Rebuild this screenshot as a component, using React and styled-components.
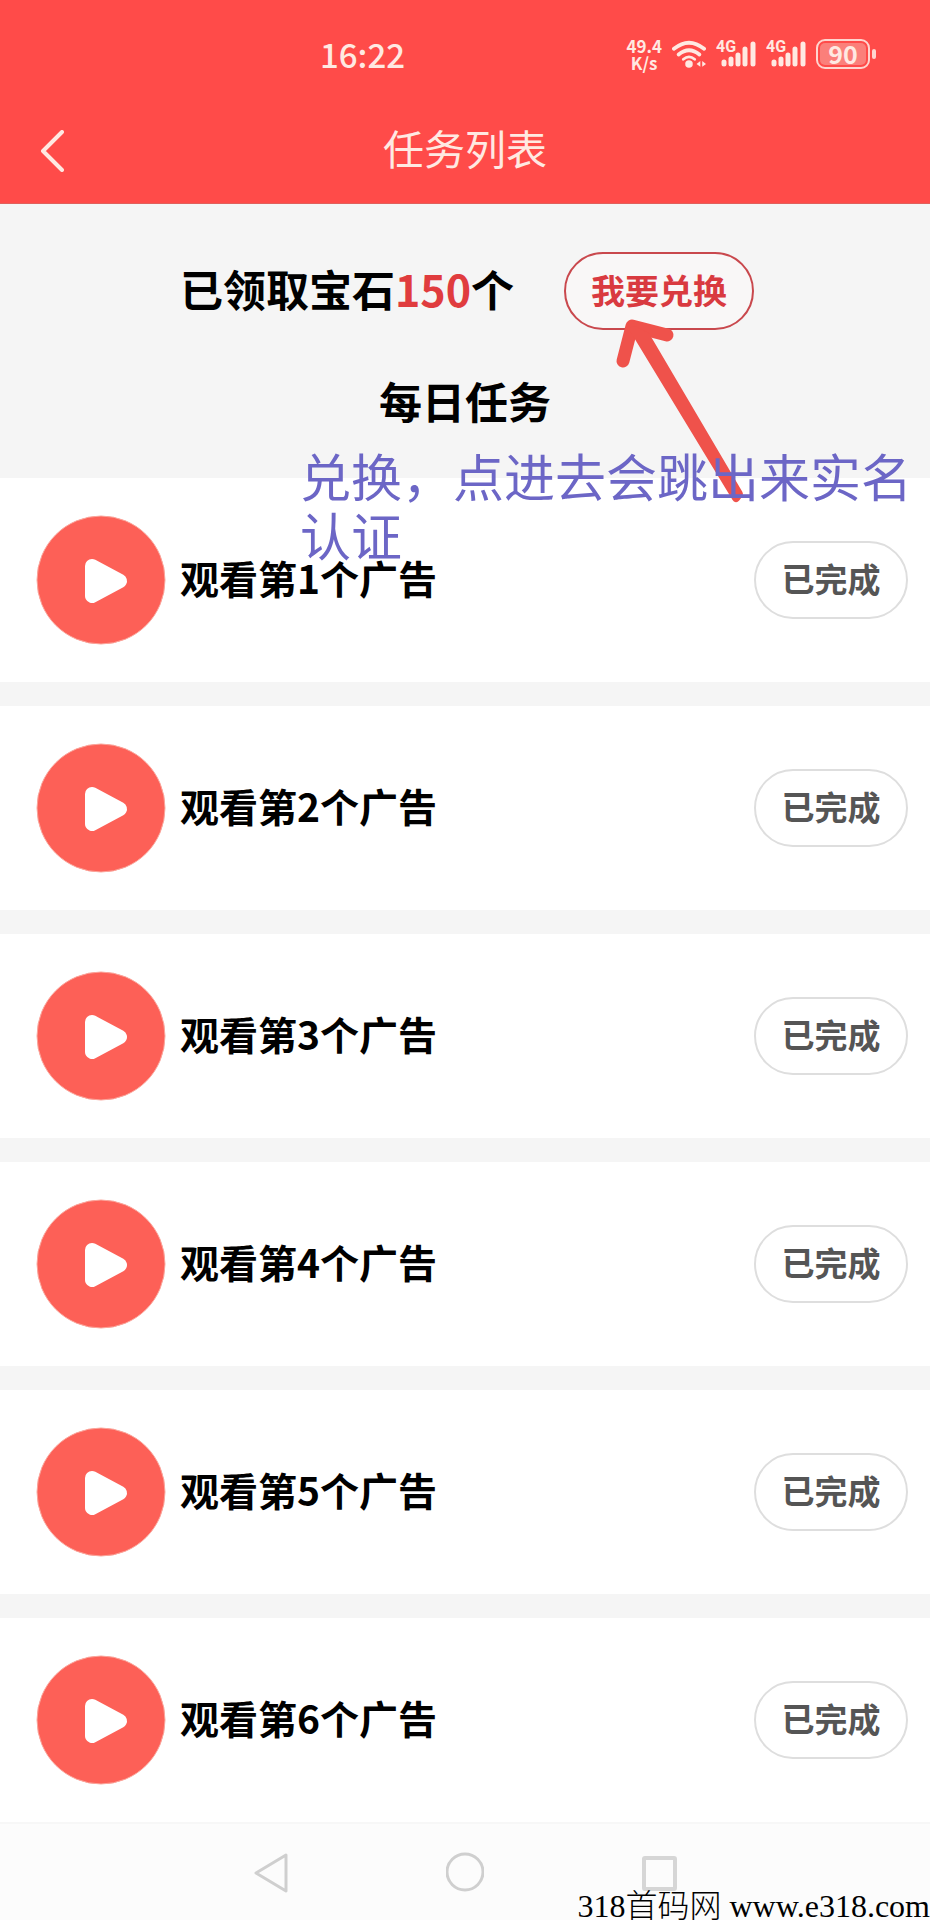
import styled, { createGlobalStyle } from "styled-components";

const tasks = [1, 2, 3, 4, 5, 6];

const App = () => {
  return (
    <>
      <GlobalStyle />
      <Header>
        <StatusBar>
          <Clock>16:22</Clock>
          <StatusIcons>
            <Speed>
              <span>49.4</span>
              <span>K/s</span>
            </Speed>
            <WifiIcon />
            <Signal />
            <Signal />
            <Battery>
              <Level>90</Level>
            </Battery>
          </StatusIcons>
        </StatusBar>
        <TitleBar>
          <BackButton aria-label="返回">
            <svg width="24" height="42" viewBox="0 0 24 42" fill="none">
              <path d="M22 2 L3 21 L22 40" stroke="#ffe9e2" strokeWidth="4" strokeLinecap="round" strokeLinejoin="round" />
            </svg>
          </BackButton>
          <Title>任务列表</Title>
        </TitleBar>
      </Header>

      <Summary>
        <GemRow>
          <GemCount>
            已领取宝石<em>150</em>个
          </GemCount>
          <ExchangeWrap>
            <ExchangeButton>我要兑换</ExchangeButton>
            <Arrow />
          </ExchangeWrap>
        </GemRow>
        <SectionTitle>每日任务</SectionTitle>
        <Note>兑换，点进去会跳出来实名认证</Note>
      </Summary>

      <TaskList>
        {tasks.map((n) => (
          <TaskRow key={n}>
            <PlayIcon />
            <TaskName>观看第{n}个广告</TaskName>
            <DoneButton>已完成</DoneButton>
          </TaskRow>
        ))}
      </TaskList>

      <NavBar>
        <NavButton aria-label="后退">
          <svg width="38" height="42" viewBox="0 0 38 42" fill="none" stroke="#cfcfcf" strokeWidth="3" strokeLinejoin="round">
            <path d="M34 3 L4 21 L34 39 Z" />
          </svg>
        </NavButton>
        <NavButton aria-label="主页">
          <svg width="38" height="42" viewBox="0 0 38 42" fill="none" stroke="#cfcfcf" strokeWidth="3">
            <circle cx="19" cy="20" r="18" />
          </svg>
        </NavButton>
        <NavButton aria-label="最近任务">
          <svg width="38" height="42" viewBox="0 0 38 42" fill="none" stroke="#d6d6d6" strokeWidth="4">
            <rect x="4" y="6" width="31" height="31" rx="1" />
          </svg>
        </NavButton>
        <Watermark>318首码网 www.e318.com</Watermark>
      </NavBar>
    </>
  );
};

const WifiIcon = () => (
  <svg width="34" height="29" viewBox="0 0 36 30" fill="none" stroke="#ffe9e2">
    <path d="M2 9 Q18 -4 34 9" strokeWidth="4" strokeLinecap="round" />
    <path d="M7 15 Q18 6 29 15" strokeWidth="4" strokeLinecap="round" />
    <path d="M12 20 Q18 15 24 20" strokeWidth="3" strokeLinecap="round" />
    <circle cx="18" cy="25" r="4" fill="#ffe9e2" stroke="none" />
    <path d="M30 22 L26 25 L30 28 Z M32 22 L36 25 L32 28 Z" fill="#ffe9e2" stroke="none" />
  </svg>
);

const Signal = () => (
  <SignalBox>
    <SignalLabel>4G</SignalLabel>
    <svg width="36" height="28" viewBox="0 0 36 28" fill="none" stroke="#ffe9e2" strokeWidth="5" strokeLinecap="round">
      <path d="M4 22 V24 M11 19 V24 M18 15 V24 M25 9 V24 M33 4 V24" />
    </svg>
  </SignalBox>
);

const PlayIcon = () => (
  <svg width="130" height="130" viewBox="0 0 130 130">
    <circle cx="65" cy="65" r="64" fill="#fd6057" stroke="#fba69c" strokeWidth="1" />
    <path d="M56 51 L84 66 L56 81 Z" fill="#fff" stroke="#fff" strokeWidth="14" strokeLinejoin="round" />
  </svg>
);

const Arrow = () => (
  <ArrowSvg width="150" height="204" viewBox="0 0 150 204" fill="none" stroke="#ef524b" strokeLinecap="round" strokeLinejoin="round">
    <path d="M19 57 L28 22 L63 31" strokeWidth="13" />
    <path d="M30 26 L42 32 L135 190 L132 194 Z" fill="#ef524b" strokeWidth="8" />
  </ArrowSvg>
);

const GlobalStyle = createGlobalStyle`
  * {
    box-sizing: border-box;
  }

  body {
    margin: 0;
    background: #fff;
    color: #000;
    font-family: "Noto Sans CJK SC", sans-serif;
  }

  button {
    font-family: inherit;
    padding: 0;
    cursor: pointer;
  }

  svg {
    display: block;
    flex-shrink: 0;
  }
`;

const Header = styled.header`
  background: #ff4b49;
  color: #ffe9e2;
  border-bottom: 1px solid #e0605c;
`;

const StatusBar = styled.div`
  display: grid;
  grid-template-columns: 1fr auto;
  align-items: center;
  height: 94px;
  padding: 14px 60px 0 320px;
`;

const Clock = styled.div`
  font-size: 33px;
  font-weight: 500;
  line-height: 40px;
`;

const StatusIcons = styled.div`
  display: flex;
  align-items: center;
  gap: 10px;
`;

const Speed = styled.div`
  display: flex;
  flex-direction: column;
  align-items: center;
  font-size: 17px;
  font-weight: 700;
  line-height: 17px;
`;

const SignalBox = styled.div`
  position: relative;
  padding-left: 4px;
`;

const SignalLabel = styled.span`
  position: absolute;
  left: 0;
  top: 0;
  font-family: Roboto, sans-serif;
  font-size: 16px;
  font-weight: 700;
  line-height: 14px;
`;

const Battery = styled.div`
  position: relative;
  width: 54px;
  height: 30px;
  padding: 2px;
  border: 2px solid #ffd5cf;
  border-radius: 9px;

  &::after {
    content: "";
    position: absolute;
    right: -8px;
    top: 8px;
    width: 4px;
    height: 10px;
    border-radius: 2px;
    background: #ffd5cf;
  }
`;

const Level = styled.div`
  height: 22px;
  border-radius: 5px;
  background: #fb7f7a;
  font-size: 25px;
  font-weight: 700;
  line-height: 20px;
  text-align: center;
`;

const TitleBar = styled.div`
  display: grid;
  grid-template-columns: 78px 1fr 78px;
  align-items: center;
  height: 109px;
`;

const BackButton = styled.button`
  justify-self: end;
  margin-right: 14px;
  padding-top: 4px;
  border: none;
  background: none;
`;

const Title = styled.h1`
  margin: 0;
  padding-bottom: 4px;
  font-size: 41px;
  font-weight: 400;
  line-height: 60px;
  text-align: center;
`;

const Summary = styled.section`
  position: relative;
  display: flex;
  flex-direction: column;
  align-items: center;
  gap: 38px;
  height: 274px;
  padding-top: 48px;
  background: #f5f5f5;
`;

const GemRow = styled.div`
  display: flex;
  align-items: center;
  gap: 50px;
  padding-left: 4px;
`;

const GemCount = styled.div`
  padding-bottom: 6px;
  font-size: 43px;
  font-weight: 700;
  line-height: 64px;

  em {
    color: #e03c3e;
    font-style: normal;
  }
`;

const ExchangeWrap = styled.div`
  position: relative;
`;

const ExchangeButton = styled.button`
  width: 190px;
  height: 78px;
  padding-bottom: 4px;
  border: 2px solid #c9484d;
  border-radius: 39px;
  background: #f9f7f7;
  color: #d93a40;
  font-size: 34px;
  font-weight: 700;
`;

const ArrowSvg = styled.svg`
  position: absolute;
  left: 40px;
  top: 52px;
  z-index: 1;
`;

const SectionTitle = styled.h2`
  margin: 0;
  font-size: 43px;
  font-weight: 700;
  line-height: 64px;
`;

const Note = styled.p`
  position: absolute;
  left: 300px;
  right: 12px;
  top: 242px;
  z-index: 2;
  margin: 0;
  color: #6c66c6;
  font-size: 51px;
  font-weight: 400;
  line-height: 59px;
`;

const TaskList = styled.main`
  display: flex;
  flex-direction: column;
  gap: 24px;
  background: #f5f5f5;
`;

const TaskRow = styled.div`
  display: flex;
  align-items: center;
  gap: 14px;
  height: 204px;
  padding: 0 22px 0 36px;
  background: #fff;
`;

const TaskName = styled.div`
  flex: 1;
  padding-bottom: 6px;
  font-size: 39px;
  font-weight: 700;
  line-height: 56px;
`;

const DoneButton = styled.button`
  width: 154px;
  height: 78px;
  padding-bottom: 4px;
  border: 2px solid #dedede;
  border-radius: 39px;
  background: #fff;
  color: #555;
  font-size: 33px;
  font-weight: 700;
`;

const NavBar = styled.nav`
  position: relative;
  display: flex;
  justify-content: center;
  gap: 156px;
  height: 98px;
  padding-top: 28px;
  border-top: 2px solid #f7f7f7;
  background: #fcfcfc;
`;

const NavButton = styled.button`
  align-self: flex-start;
  border: none;
  background: none;
`;

const Watermark = styled.div`
  position: absolute;
  right: 0;
  bottom: 0;
  color: #000;
  font-family: "Liberation Serif", "Noto Sans CJK SC", serif;
  font-size: 32px;
  font-weight: 300;
  line-height: 28px;
  white-space: nowrap;
`;

export default App;
